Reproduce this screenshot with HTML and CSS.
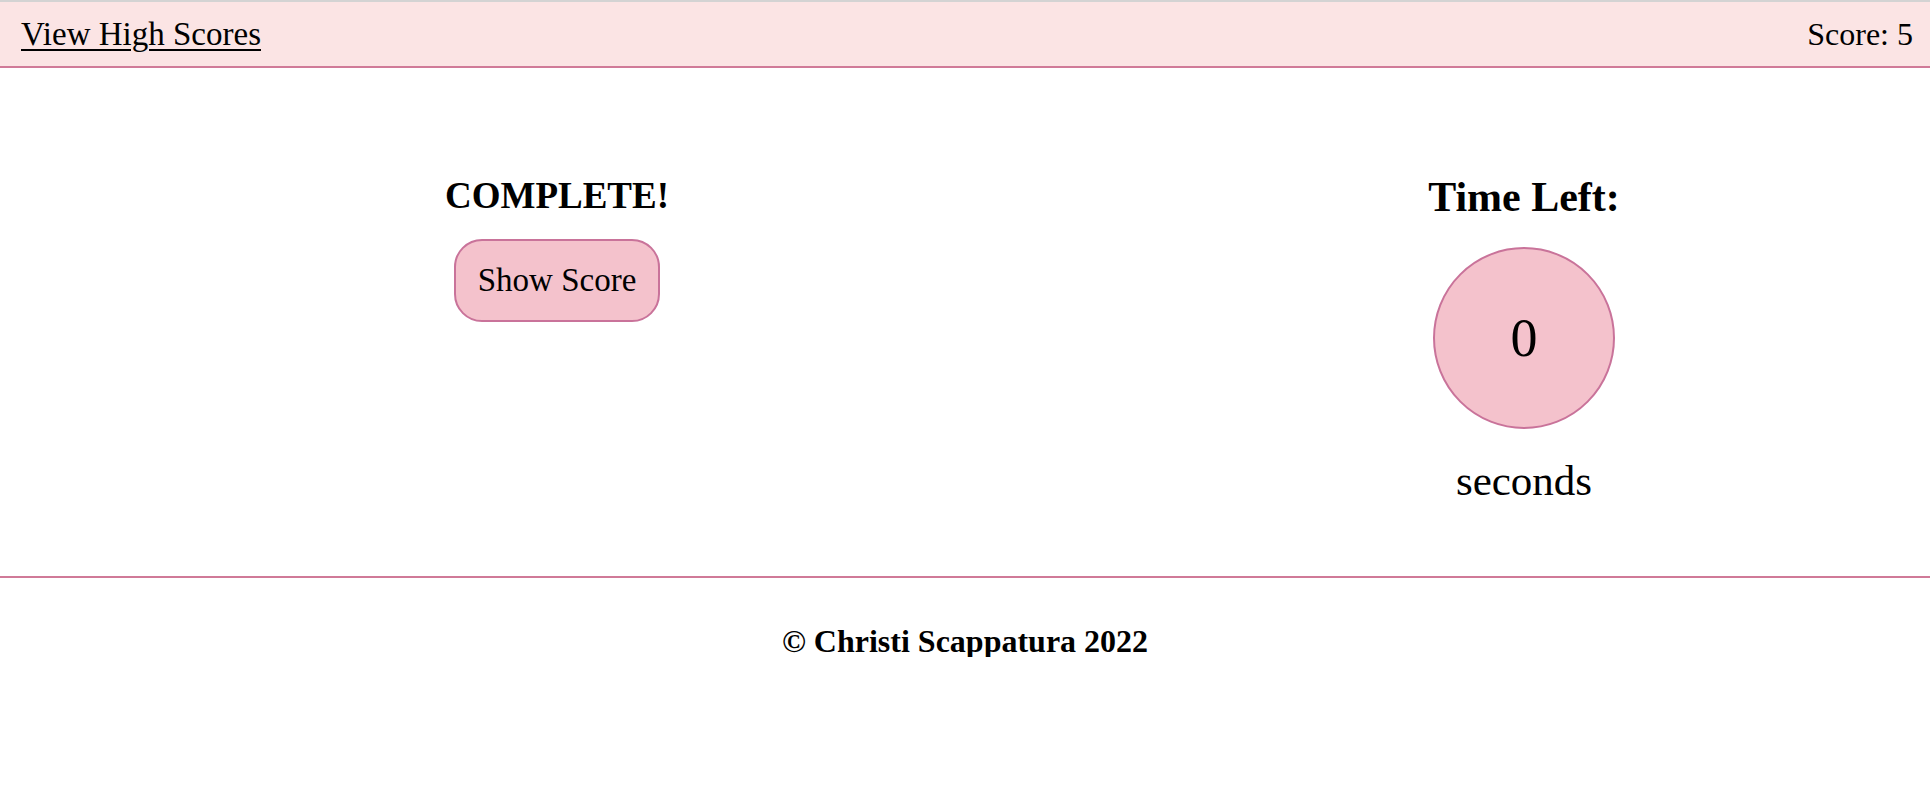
FILE: index.html
```html
<!DOCTYPE html>
<html lang="en">
<head>
<meta charset="utf-8">
<title>Quiz</title>
<link rel="stylesheet" href="styles.css">
</head>
<body>
<header class="topbar">
  <a class="highscores" href="#">View High Scores</a>
  <span class="score">Score: 5</span>
</header>
<main class="game">
  <section class="quiz">
    <h2 class="status">COMPLETE!</h2>
    <button class="show-score">Show Score</button>
  </section>
  <section class="timer">
    <h2 class="timer-title">Time Left:</h2>
    <div class="timer-circle">0</div>
    <p class="timer-unit">seconds</p>
  </section>
</main>
<footer class="footer">
  <p class="copyright">© Christi Scappatura 2022</p>
</footer>
</body>
</html>
```
FILE: styles.css
```css
* { box-sizing: border-box; }
html, body { margin: 0; padding: 0; }
body {
  font-family: "Liberation Serif", "Times New Roman", serif;
  color: #000;
  background: #fff;
}
.topbar {
  display: flex;
  justify-content: space-between;
  align-items: center;
  height: 68px;
  padding: 0 17px 0 21px;
  background: #fbe4e4;
  border-top: 2px solid #d3d3d3;
  border-bottom: 2px solid #d07a98;
  font-size: 32px;
}
.highscores {
  font-size: 33px;
  color: #000;
  text-decoration: underline;
  text-underline-offset: 4px;
  text-decoration-thickness: 2px;
}
.score { color: #000; }
.game {
  display: grid;
  grid-template-columns: 1114fr 816fr;
  padding: 108px 0 74px;
}
.quiz, .timer {
  display: flex;
  flex-direction: column;
  align-items: center;
}
.timer { padding-left: 4px; }
.status {
  margin: 1px 0 0;
  font-size: 37px;
  line-height: 1;
  font-weight: bold;
}
.show-score {
  margin-top: 25px;
  width: 206px;
  padding: 23px 0;
  font-family: inherit;
  font-size: 33px;
  line-height: 1;
  color: #000;
  background: #f4c2cc;
  border: 2px solid #c9739a;
  border-radius: 28px;
}
.timer-title {
  margin: 0;
  font-size: 42px;
  line-height: 1;
  font-weight: bold;
}
.timer-circle {
  margin-top: 29px;
  width: 182px;
  height: 182px;
  border-radius: 50%;
  background: #f4c2cc;
  border: 2px solid #c9739a;
  display: flex;
  align-items: center;
  justify-content: center;
  font-size: 54px;
  line-height: 1;
}
.timer-unit {
  margin: 30px 0 0;
  font-size: 43px;
  line-height: 1;
}
.footer {
  border-top: 2px solid #d07a98;
  padding-top: 47px;
  text-align: center;
}
.copyright {
  margin: 0;
  font-size: 32px;
  line-height: 1;
  font-weight: bold;
}
```
